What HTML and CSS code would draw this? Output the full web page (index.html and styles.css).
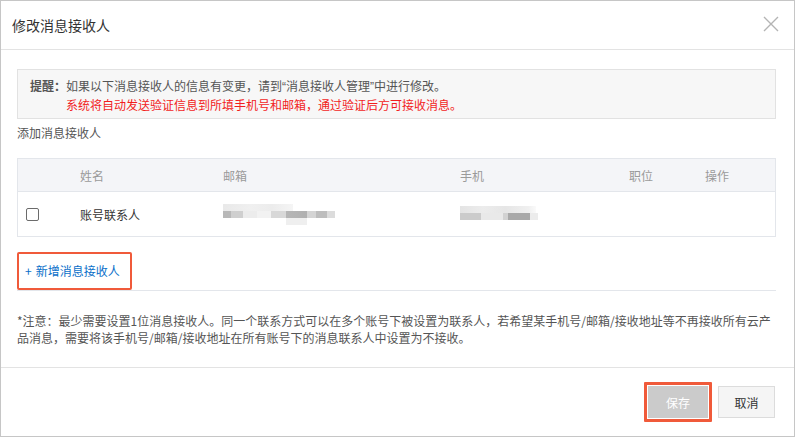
FILE: index.html
```html
<!DOCTYPE html>
<html lang="zh-CN">
<head>
<meta charset="utf-8">
<title>修改消息接收人</title>
<link rel="stylesheet" href="styles.css">
</head>
<body>
<div class="dialog">
  <div class="dlg-header">
    <span class="dlg-title">修改消息接收人</span>
    <svg class="close" width="16" height="16" viewBox="0 0 16 16"><path d="M1 1L15 15M15 1L1 15" stroke="#b4b4b4" stroke-width="1.4" fill="none"/></svg>
  </div>
  <div class="dlg-body">
    <div class="alert">
      <span class="alert-label">提醒：</span>
      <div class="alert-lines">
        <div class="alert-line">如果以下消息接收人的信息有变更，请到<span class="q">“</span>消息接收人管理<span class="q">”</span>中进行修改。</div>
        <div class="alert-line red">系统将自动发送验证信息到所填手机号和邮箱，通过验证后方可接收消息。</div>
      </div>
    </div>
    <div class="section-label">添加消息接收人</div>
    <div class="table">
      <div class="tr th">
        <div class="td"></div>
        <div class="td">姓名</div>
        <div class="td">邮箱</div>
        <div class="td">手机</div>
        <div class="td">职位</div>
        <div class="td">操作</div>
      </div>
      <div class="tr row">
        <div class="td"><span class="checkbox"></span></div>
        <div class="td">账号联系人</div>
        <div class="td"><div class="blur-email"><span class="b1"></span><span class="b2"></span><span class="b3"></span></div></div>
        <div class="td"><div class="blur-phone"><span class="p1"></span><span class="p2"></span></div></div>
        <div class="td"></div>
        <div class="td"></div>
      </div>
    </div>
    <div class="add-area">
      <a class="add-link"><span class="plus">+</span>新增消息接收人</a>
    </div>
    <p class="note">*注意：最少需要设置1位消息接收人。同一个联系方式可以在多个账号下被设置为联系人，若希望某手机号/邮箱/接收地址等不再接收所有云产<br>品消息，需要将该手机号/邮箱/接收地址在所有账号下的消息联系人中设置为不接收。</p>
  </div>
  <div class="dlg-footer">
    <span class="highlight"><button class="btn btn-save">保存</button></span>
    <button class="btn btn-cancel">取消</button>
  </div>
</div>
</body>
</html>
```
FILE: styles.css
```css
* { box-sizing: border-box; }
html, body { margin: 0; padding: 0; background: #fff; }
body {
  font-family: "Noto Sans CJK SC", "Liberation Sans", sans-serif;
  font-size: 12px;
  color: #333;
}
.dialog {
  width: 795px;
  height: 437px;
  border: 1px solid #c6c6c6;
  display: flex;
  flex-direction: column;
  background: #fff;
}
.dlg-header {
  height: 49px;
  flex: none;
  border-bottom: 1px solid #e3e3e3;
  display: flex;
  align-items: center;
  justify-content: space-between;
  padding: 0 15px 0 11px;
}
.dlg-title { font-size: 14px; color: #333; line-height: 20px; }
.close { display: block; margin-top: -2px; }
.dlg-body {
  padding: 19px 18px 0 16px;
  flex: none;
}
.alert {
  height: 50px;
  border: 1px solid #e2e2e2;
  background: #f7f7f7;
  display: flex;
  padding: 7px 12px 0 12px;
  line-height: 18px;
}
.alert-label { font-weight: bold; color: #555; }
.alert-line { color: #555; }
.alert-line.red { color: #f21d1d; }
.q { font-family: "Liberation Sans", sans-serif; }
.section-label {
  margin-top: 5px;
  line-height: 18px;
  color: #555;
}
.table {
  margin-top: 16px;
  border: 1px solid #e3e6eb;
}
.tr {
  display: grid;
  grid-template-columns: 62px 143px 237px 169px 76px 1fr;
  align-items: center;
}
.th {
  height: 33px;
  background: #f4f5f8;
  border-bottom: 1px solid #e3e6eb;
  color: #9a9a9a;
}
.row { height: 44px; color: #333; }
.td { padding: 0; }
.th .td { padding-top: 1px; }
.checkbox {
  display: block;
  width: 13px;
  height: 13px;
  margin-left: 8px;
  border: 1px solid #6b6b6b;
  border-radius: 2px;
  background: #fff;
}
.blur-email { position: relative; width: 113px; height: 21px; margin-top: 1px; }
.blur-email span { position: absolute; display: block; }
.blur-email .b1 { left: 0; top: 0; width: 70px; height: 7px; background: linear-gradient(90deg, #e9e9e9, #f0f0f0 40%, #ececec 70%, #f5f5f5); }
.blur-email .b2 { left: 0; top: 7px; width: 112px; height: 7px; background: linear-gradient(90deg, #b8b8b8 0, #b8b8b8 7%, #cfcfcf 7%, #cfcfcf 18%, #ececec 18%, #ececec 30%, #f2f2f2 30%, #f2f2f2 43%, #d8d8d8 43%, #d8d8d8 56%, #b6b6b6 56%, #b0b0b0 75%, #d4d4d4 75%, #d4d4d4 83%, #bdbdbd 83%, #bdbdbd 93%, #dcdcdc 93%); }
.blur-email .b3 { left: 63px; top: 14px; width: 21px; height: 7px; background: #efefef; }
.blur-phone { position: relative; width: 78px; height: 14px; margin-top: -2px; }
.blur-phone span { position: absolute; display: block; left: 0; }
.blur-phone .p1 { top: 0; width: 76px; height: 7px; background: linear-gradient(90deg, #e4e4e4, #ececec 30%, #e6e6e6 60%, #f0f0f0 90%, #fafafa); }
.blur-phone .p2 { top: 7px; width: 78px; height: 7px; background: linear-gradient(90deg, #cbcbcb 0, #cbcbcb 27%, #e9e9e9 27%, #e9e9e9 55%, #d2d2d2 55%, #d2d2d2 62%, #a9a9a9 62%, #a9a9a9 90%, #ececec 90%); }
.add-area {
  margin-top: 15px;
  height: 39px;
  border-bottom: 1px solid #e3e6eb;
}
.add-link {
  display: inline-block;
  height: 38px;
  width: 115px;
  border: 2px solid #f05a3a;
  border-radius: 2px;
  line-height: 34px;
  padding-left: 6px;
  color: #0a6fc9;
  font-size: 12px;
  text-decoration: none;
  cursor: pointer;
}
.plus { margin-right: 4px; }
.note {
  margin: 21px 0 0 0;
  line-height: 17px;
  color: #555;
  white-space: nowrap;
}
.dlg-footer {
  margin-top: auto;
  height: 69px;
  border-top: 1px solid #e3e3e3;
  display: flex;
  align-items: center;
  justify-content: flex-end;
  padding: 0 19px 0 0;
  gap: 6px;
}
.highlight {
  display: inline-block;
  border: 3px solid #f05a3a;
  padding: 1px;
  border-radius: 1px;
}
.btn {
  display: block;
  height: 32px;
  font-family: "Noto Sans CJK SC", "Liberation Sans", sans-serif;
  font-size: 12px;
  border-radius: 0;
  padding: 0;
  cursor: pointer;
}
.btn-save {
  width: 60px;
  background: #cbcbcb;
  border: 1px solid #cbcbcb;
  color: #fff;
}
.btn-cancel {
  width: 57px;
  background: #f5f5f5;
  border: 1px solid #dcdcdc;
  color: #333;
}
```
